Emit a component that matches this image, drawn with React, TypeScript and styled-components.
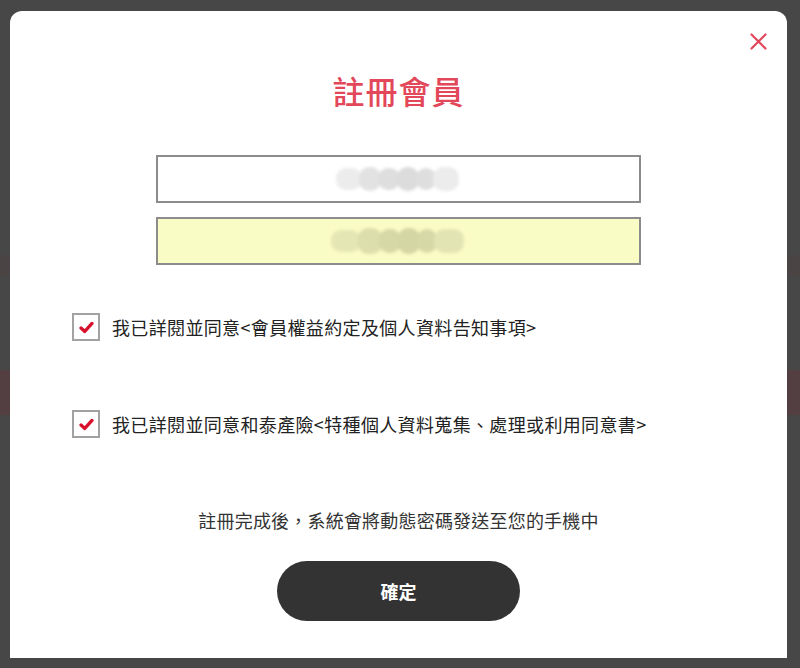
import React from "react";
import styled, { createGlobalStyle } from "styled-components";

const GlobalStyle = createGlobalStyle`
  html, body {
    margin: 0;
    padding: 0;
    width: 800px;
    height: 668px;
    overflow: hidden;
    background: #474747;
    font-family: "Noto Sans CJK TC", "Noto Sans", sans-serif;
  }
`;

const Page = styled.div`
  width: 800px;
  height: 668px;
  box-sizing: border-box;
  padding: 11px 13px 10px 10px;
  background: linear-gradient(
    to bottom,
    #474747 0px,
    #474747 255px,
    #4a4444 255px,
    #4a4444 276px,
    #474747 276px,
    #474747 370px,
    #533f41 370px,
    #533f41 415px,
    #474747 415px
  );
`;

const Modal = styled.div`
  position: relative;
  width: 777px;
  height: 647px;
  background: #ffffff;
  border-radius: 12px 12px 0 0;
  display: flex;
  flex-direction: column;
  align-items: center;
  padding-top: 59px;
  box-sizing: border-box;
`;

const CloseButton = styled.button`
  position: absolute;
  top: 20px;
  right: 19px;
  width: 20px;
  height: 20px;
  padding: 0;
  border: none;
  background: transparent;
  display: flex;
  align-items: center;
  justify-content: center;
  cursor: pointer;
`;

const Title = styled.h1`
  margin: 0;
  font-size: 32px;
  line-height: 40px;
  font-weight: 500;
  color: #e2475a;
  letter-spacing: 1px;
`;

const Field = styled.div<{ $autofill?: boolean; $top: number }>`
  margin-top: ${(p) => p.$top}px;
  width: 485px;
  height: 48px;
  box-sizing: border-box;
  border: 2px solid #8c8c8c;
  background: ${(p) => (p.$autofill ? "#fafcc5" : "#ffffff")};
  display: flex;
  align-items: center;
  justify-content: center;
`;

const Blob = styled.div`
  display: flex;
  align-items: center;
  filter: blur(1.6px);
`;

const Dot = styled.span<{ $c: string; $w: number; $h: number }>`
  display: block;
  width: ${(p) => p.$w}px;
  height: ${(p) => p.$h}px;
  border-radius: 10px;
  background: ${(p) => p.$c};
  margin-left: -3px;
`;

const Agreements = styled.div`
  align-self: flex-start;
  margin-left: 62px;
  display: flex;
  flex-direction: column;
`;

const AgreeRow = styled.label<{ $top: number }>`
  margin-top: ${(p) => p.$top}px;
  display: flex;
  align-items: center;
  gap: 12px;
  font-size: 18px;
  line-height: 28px;
  letter-spacing: 0.35px;
  color: #222222;
  cursor: pointer;
`;

const Box = styled.span`
  width: 28px;
  height: 28px;
  box-sizing: border-box;
  border: 2px solid #a2a2a2;
  display: flex;
  align-items: center;
  justify-content: center;
  background: #fff;
`;

const Notice = styled.p`
  margin: 70px 0 0;
  font-size: 18px;
  line-height: 24px;
  letter-spacing: 0.2px;
  color: #333333;
  text-align: center;
`;

const Confirm = styled.button`
  margin-top: 29px;
  width: 243px;
  height: 60px;
  border: none;
  border-radius: 30px;
  background: #333333;
  color: #ffffff;
  font-family: "Noto Sans CJK TC", "Noto Sans", sans-serif;
  font-size: 18px;
  font-weight: 700;
  cursor: pointer;
`;

const Check = () => (
  <svg width="15" height="13" viewBox="0 0 15 13">
    <path
      d="M2 7 L5.8 10.4 L13 2.4"
      fill="none"
      stroke="#d8102b"
      strokeWidth="3.3"
      strokeLinecap="round"
      strokeLinejoin="round"
    />
  </svg>
);

const CloseIcon = () => (
  <svg width="17" height="17" viewBox="0 0 17 17">
    <path
      d="M1.5 1.5 L15.5 15.5 M15.5 1.5 L1.5 15.5"
      stroke="#e2475a"
      strokeWidth="2.2"
      strokeLinecap="round"
    />
  </svg>
);

const blobA = [
  { c: "#ececec", w: 26, h: 22 },
  { c: "#e2e2e2", w: 22, h: 24 },
  { c: "#dedede", w: 22, h: 22 },
  { c: "#dcdcdc", w: 22, h: 24 },
  { c: "#dedede", w: 20, h: 22 },
  { c: "#ececec", w: 26, h: 24 },
];

const blobB = [
  { c: "#e4e6b4", w: 30, h: 22 },
  { c: "#dcdeac", w: 24, h: 26 },
  { c: "#d6d8a6", w: 22, h: 24 },
  { c: "#d4d6a4", w: 22, h: 26 },
  { c: "#d6d8a6", w: 20, h: 24 },
  { c: "#e2e4b4", w: 30, h: 24 },
];

export default function App() {
  return (
    <>
      <GlobalStyle />
      <Page>
        <Modal>
          <CloseButton aria-label="close">
            <CloseIcon />
          </CloseButton>
          <Title>註冊會員</Title>
          <Field $top={45}>
            <Blob>
              {blobA.map((d, i) => (
                <Dot key={i} $c={d.c} $w={d.w} $h={d.h} />
              ))}
            </Blob>
          </Field>
          <Field $top={14} $autofill>
            <Blob>
              {blobB.map((d, i) => (
                <Dot key={i} $c={d.c} $w={d.w} $h={d.h} />
              ))}
            </Blob>
          </Field>
          <Agreements>
            <AgreeRow $top={48}>
              <Box>
                <Check />
              </Box>
              我已詳閱並同意&lt;會員權益約定及個人資料告知事項&gt;
            </AgreeRow>
            <AgreeRow $top={69}>
              <Box>
                <Check />
              </Box>
              我已詳閱並同意和泰產險&lt;特種個人資料蒐集、處理或利用同意書&gt;
            </AgreeRow>
          </Agreements>
          <Notice>註冊完成後，系統會將動態密碼發送至您的手機中</Notice>
          <Confirm>確定</Confirm>
        </Modal>
      </Page>
    </>
  );
}
